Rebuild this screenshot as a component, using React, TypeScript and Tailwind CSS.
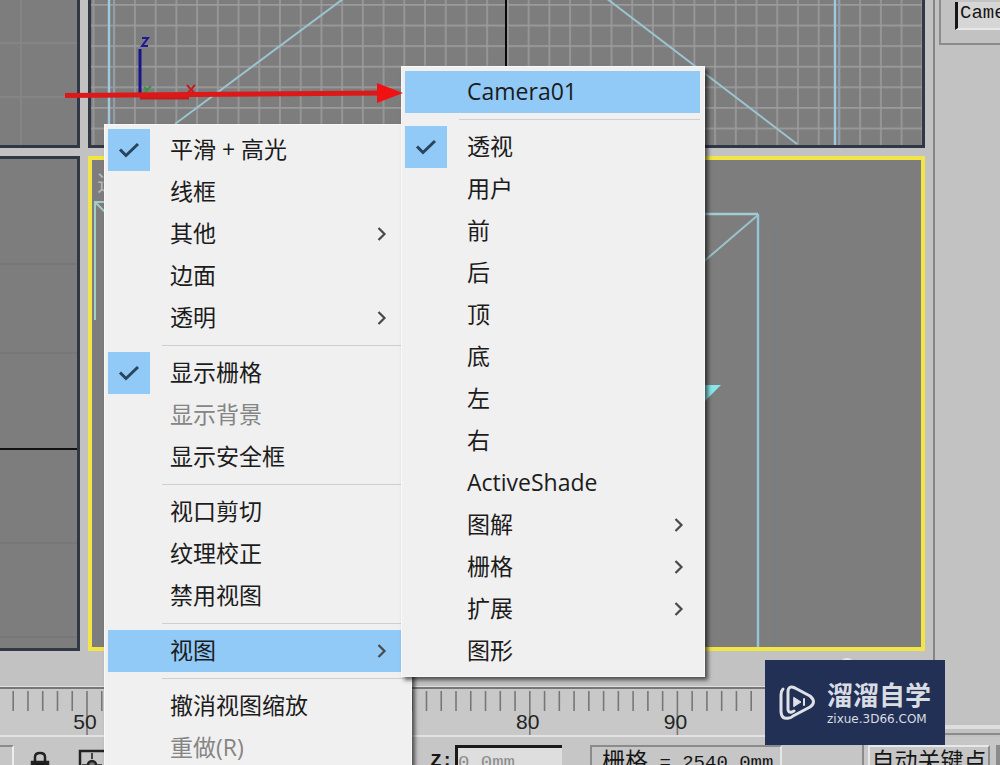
import React from "react";

type Entry = {
  label: string;
  checked?: boolean;
  submenu?: boolean;
  disabled?: boolean;
  active?: boolean;
};

const viewportMenu: Entry[][] = [
  [
    { label: "平滑 + 高光", checked: true },
    { label: "线框" },
    { label: "其他", submenu: true },
    { label: "边面" },
    { label: "透明", submenu: true },
  ],
  [
    { label: "显示栅格", checked: true },
    { label: "显示背景", disabled: true },
    { label: "显示安全框" },
  ],
  [{ label: "视口剪切" }, { label: "纹理校正" }, { label: "禁用视图" }],
  [{ label: "视图", submenu: true, active: true }],
  [{ label: "撤消视图缩放" }, { label: "重做(R)", disabled: true }],
];

const viewsMenu: Entry[][] = [
  [{ label: "Camera01", active: true }],
  [
    { label: "透视", checked: true },
    { label: "用户" },
    { label: "前" },
    { label: "后" },
    { label: "顶" },
    { label: "底" },
    { label: "左" },
    { label: "右" },
    { label: "ActiveShade" },
    { label: "图解", submenu: true },
    { label: "栅格", submenu: true },
    { label: "扩展", submenu: true },
    { label: "图形" },
  ],
];

function MenuItem({ entry }: { entry: Entry }) {
  const tone = entry.disabled ? "text-[#858585]" : "text-[#1c1c1c]";
  const back = entry.active ? "bg-[#91c9f7]" : "";
  return (
    <li>
      <button
        type="button"
        disabled={entry.disabled}
        className={`flex h-[42px] w-full items-center text-left text-[23px] leading-none ${tone} ${back}`}
      >
        <span
          className={`flex size-[42px] shrink-0 items-center justify-center ${entry.checked ? "bg-[#91c9f7]" : ""}`}
        >
          {entry.checked && (
            <svg width="22" height="18" viewBox="0 0 22 18" fill="none" stroke="#26455f" strokeWidth="3">
              <path d="M2 8.500l6 6L20 3" />
            </svg>
          )}
        </span>
        <span className="ml-5 flex-1 whitespace-nowrap pb-0.5">{entry.label}</span>
        {entry.submenu && (
          <svg className="mr-4 shrink-0" width="10" height="16" viewBox="0 0 10 16" fill="none" stroke="#4a4a4a" strokeWidth="2.2">
            <path d="M1.500 2l6 6-6 6" />
          </svg>
        )}
      </button>
    </li>
  );
}

function Menu({ groups, name, className }: { groups: Entry[][]; name: string; className: string }) {
  return (
    <nav
      aria-label={name}
      className={`absolute border border-[#f8f8f8] bg-[#f0f0f0] py-1 pl-[3px] shadow-[3px_3px_4px_rgba(0,0,0,0.6)] ${className}`}
    >
      {groups.map((group, i) => (
        <React.Fragment key={i}>
          {i > 0 && <hr className="my-1.5 ml-[54px] border-t border-[#cfcfcf]" />}
          <ul>
            {group.map((entry) => (
              <MenuItem key={entry.label} entry={entry} />
            ))}
          </ul>
        </React.Fragment>
      ))}
    </nav>
  );
}

function FrontView() {
  return (
    <svg className="h-full w-full" fill="none">
      <defs>
        <pattern id="grid" x="1.500" y="4" width="20.72" height="20.6" patternUnits="userSpaceOnUse">
          <path d="M0 .8H20.720M1 0V20.600" stroke="#9b9b9b" strokeWidth="1.6" />
        </pattern>
      </defs>
      <rect width="100%" height="100%" fill="url(#grid)" />
      <path d="M415 0V150" stroke="#080808" strokeWidth="2" />
      <path d="M18 0V150M744 0V150" stroke="#9fc9dc" strokeWidth="2.400" />
      <path d="M23 0V150M748 0V150" stroke="#8fa3ae" strokeWidth="1.500" />
      <path d="M252 -1L84 124M515 -2L706 144" stroke="#9cc4d0" strokeWidth="2" />
      <path d="M49 49V97" stroke="#16148f" strokeWidth="3" />
      <path d="M51 38h6l-6 8h6" stroke="#1d189c" strokeWidth="2" />
      <path d="M53 87l3 3 4-4M56 90l-3 4" stroke="#38923e" strokeWidth="2" />
      <path d="M49 98H98" stroke="#c51d1d" strokeWidth="3" />
      <path d="M96 85l8 9M104 85l-8 9" stroke="#c51d1d" strokeWidth="2" />
    </svg>
  );
}

function PerspectiveView() {
  return (
    <svg className="h-full w-full" fill="none">
      <text x="5" y="31" fontSize="22" fill="#b8b8b8">透视</text>
      <path d="M3 160V42h14M4 43l12 12" stroke="#a0cdc6" strokeWidth="2" />
      <path d="M600 54H666" stroke="#a4ccd4" strokeWidth="2.400" />
      <path d="M666 54V500" stroke="#94c6da" strokeWidth="2.400" />
      <path d="M666 55L610 103" stroke="#9cc2cb" strokeWidth="2" />
      <path d="M682 66V500" stroke="#71818a" strokeWidth="1.500" />
      <path d="M608 225h21l-21 21z" fill="#8ae6e8" />
    </svg>
  );
}

function Ruler() {
  const frames = Array.from({ length: 64 }, (_, i) => 44 + i);
  return (
    <svg className="h-full w-full font-['Liberation_Sans',sans-serif]">
      {frames.map((n) => {
        const x = 87 + (n - 50) * 14.76;
        const major = n % 10 === 0;
        return (
          <g key={n}>
            <path d={`M${x} 2V${major ? 47 : 22}`} stroke="#777" strokeWidth="1.600" />
            {major && (
              <text x={x - 2} y="40" fontSize="21" textAnchor="middle" fill="#242424">
                {n}
              </text>
            )}
          </g>
        );
      })}
    </svg>
  );
}

function StatusBar() {
  return (
    <footer className="flex h-7 shrink-0 items-start overflow-hidden bg-[#c6c6c6] pt-2 font-['Liberation_Mono','Noto_Sans_CJK_SC',monospace] text-[19px] text-[#161616]">
      <div className="h-10 w-[14px] shrink-0 border-r-2 border-t-2 border-r-[#ededed] border-t-[#8b8b8b]" />
      <button type="button" aria-label="锁定选择" className="ml-4 mt-1.5 shrink-0">
        <svg width="20" height="28" viewBox="0 0 20 28" fill="none" stroke="#222" strokeWidth="2.500">
          <path d="M5 11V6q0-4 5-4t5 4v5" />
          <path d="M2 11h16v14H2z" fill="#1c1c1c" />
        </svg>
      </button>
      <button type="button" aria-label="绝对模式变换输入" className="ml-7 mt-1 shrink-0">
        <svg width="30" height="30" viewBox="0 0 30 30" fill="none" stroke="#222" strokeWidth="2.500">
          <path d="M30 2H2v26h28" />
          <path d="M14 4v6M4 16h20" strokeWidth="1.600" />
          <circle cx="14" cy="16" r="4" fill="#777" />
        </svg>
      </button>
      <div className="ml-auto flex shrink-0 items-start">
        <label htmlFor="z-value" className="mr-0.5 mt-1 font-bold leading-6">Z:</label>
        <input
          id="z-value"
          readOnly
          defaultValue="0.0mm"
          className="h-8 w-[107px] border-l-[3px] border-t-[3px] border-[#1a1a1a] bg-[#dedede] text-[#8c8c8c] outline-none"
        />
        <output className="ml-7 flex h-9 w-[192px] items-start whitespace-pre border-l-2 border-r-2 border-t-2 border-[#8b8b8b] border-r-[#e6e6e6] pl-2.5 pt-0.5 leading-7">
          <span className="text-[23px]">栅格</span>
          <span> = 2540.0mm</span>
        </output>
        <div className="ml-20 h-9 border-l-2 border-[#8b8b8b] pl-1">
          <button
            type="button"
            className="h-9 w-[122px] whitespace-nowrap border-2 border-[#e8e8e8] border-r-[#8b8b8b] text-[23px] leading-8"
          >
            自动关键点
          </button>
        </div>
        <div className="ml-1.5 h-9 w-1 bg-[#8b8b8b]" />
      </div>
    </footer>
  );
}

function Watermark() {
  return (
    <aside className="absolute left-[765px] top-[660px] flex h-[85px] w-[180px] items-center gap-2.5 bg-[#223056] pl-[14px] text-[#d9dce2]">
      <svg className="shrink-0" width="38" height="40" viewBox="0 0 38 40" fill="none" stroke="#dfe1e5" strokeWidth="3" strokeLinecap="round" strokeLinejoin="round">
        <path d="M4 6Q2 8 2 12v16q0 9 8 7 2 0 4-2l17-9q7-5 0-11L16 5q-7-3-7 4v17q0 4 4 3l2-1" />
        <path d="M15 14.500l7 4.500-7 4.500z" fill="#dfe1e5" strokeWidth="1" />
        <path d="M25 16v6" strokeWidth="2" />
      </svg>
      <div>
        <p className="text-[26px] font-bold leading-8">溜溜自学</p>
        <p className="font-['DejaVu_Sans',sans-serif] text-[12px] leading-4">zixue.3D66.COM</p>
      </div>
    </aside>
  );
}

export default function App() {
  return (
    <main className="relative flex h-screen flex-col overflow-hidden bg-[#c2c2c2] font-['Open_Sans','Noto_Sans_CJK_SC',sans-serif]">
      <div className="flex min-h-0 flex-1">
        <div className="flex min-w-0 flex-1 flex-col">
          <div className="grid min-h-0 flex-1 grid-cols-[80px_minmax(0,1fr)] grid-rows-[148px_minmax(0,1fr)] gap-2 pr-2">
            <section aria-label="顶视图" className="overflow-hidden border-b-[3px] border-r-[3px] border-[#303846] bg-[#7d7d7d]">
              <svg className="h-full w-full">
                <path d="M21 0V150M0 43H80M0 97H80" stroke="#858585" strokeWidth="2" />
              </svg>
            </section>
            <section aria-label="前视图" className="overflow-hidden border-x-[3px] border-b-[3px] border-[#303846] bg-[#7d7d7d]">
              <FrontView />
            </section>
            <section aria-label="左视图" className="overflow-hidden border-y-[3px] border-r-[3px] border-[#303846] bg-[#7d7d7d]">
              <svg className="h-full w-full">
                <path d="M0 105H80M0 194H80M0 384H80M0 478H80" stroke="#757575" strokeWidth="1.500" />
                <path d="M0 290H80" stroke="#111" strokeWidth="2" />
              </svg>
            </section>
            <section aria-label="透视图" className="overflow-hidden border-4 border-[#f2e545] bg-[#7d7d7d]">
              <PerspectiveView />
            </section>
          </div>
          <div className="h-9 shrink-0 border-b border-[#e0e0e0]">
            <svg className="h-full w-full" fill="none">
              <circle cx="847" cy="15" r="7" stroke="#e4e4e4" strokeWidth="2" />
            </svg>
          </div>
          <div className="h-[50px] shrink-0 border-b-2 border-t-2 border-b-[#e2e2e2] border-t-[#777] bg-[#c8c8c8]">
            <Ruler />
          </div>
        </div>
        <aside className="flex w-[67px] shrink-0 flex-col border-l-2 border-[#858585]">
          <div className="ml-1 h-[45px] border-b-2 border-l-2 border-[#8b8b8b] pl-3.5">
            <input
              aria-label="对象名称"
              readOnly
              defaultValue="Camera01"
              className="h-7 w-[110px] border-b-2 border-l-[3px] border-b-[#e8e8e8] border-l-[#161616] bg-[#d6d6d6] pb-1 pl-0.5 font-['Liberation_Mono',monospace] text-[19px] text-[#161616] outline-none"
            />
          </div>
          <div className="flex-1" />
          <div className="h-1 bg-[#dedede]" />
          <div className="mt-1 h-1 border-t-2 border-[#8b8b8b]" />
        </aside>
      </div>
      <StatusBar />

      <Menu groups={viewportMenu} name="视口菜单" className="left-[104px] top-[124px] w-[308px] pr-2" />
      <Menu groups={viewsMenu} name="视图" className="left-[401px] top-[66px] w-[304px] pr-1" />

      <svg className="pointer-events-none absolute left-0 top-20 h-8 w-[410px]">
        <path d="M65 15.500L382 13" stroke="#dd1818" strokeWidth="5" />
        <path d="M377 3l26 10-26 10z" fill="#f01212" />
      </svg>
      <Watermark />
    </main>
  );
}
